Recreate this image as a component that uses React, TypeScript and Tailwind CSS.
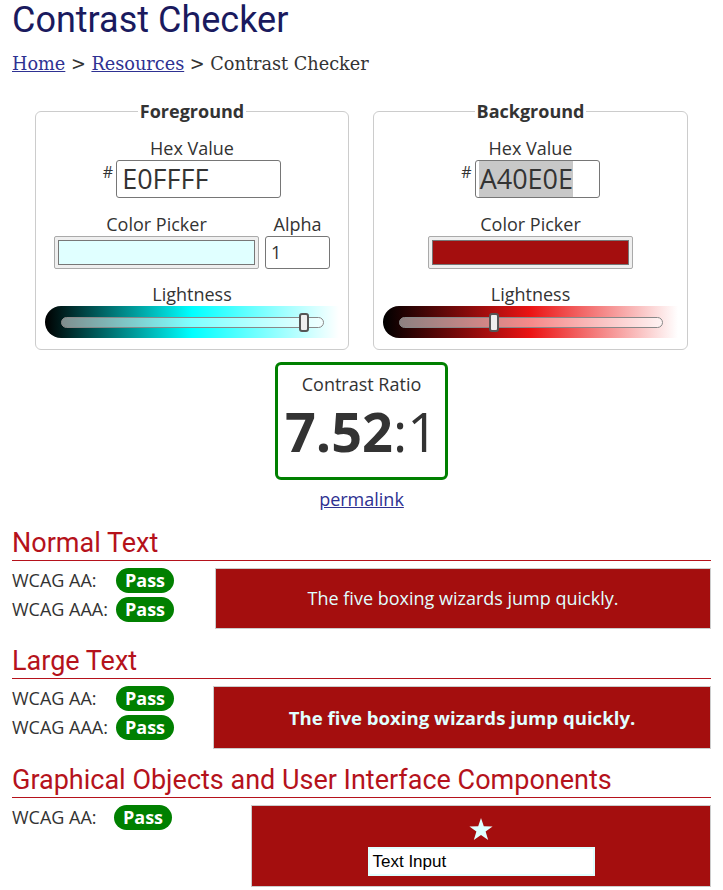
import React from 'react';

const sans = "font-['Open_Sans',sans-serif]";

const Slider = ({ gradient, thumb }: { gradient: string; thumb: number }) => (
  <div className={`flex h-[32px] items-center rounded-l-full pl-[16px] pr-[15px] ${gradient}`}>
    <div className="relative h-[11px] flex-1 rounded-full border border-[#888] bg-white/50">
      <div
        className="absolute top-[-5px] h-[19px] w-[10px] rounded-[3px] border-2 border-[#555] bg-[#eee]"
        style={{ left: thumb }}
      />
    </div>
  </div>
);

const Swatch = ({ color }: { color: string }) => (
  <div className="h-[33px] w-[205px] rounded-[2px] border border-[#aaa] bg-[#efefef] p-[3px]">
    <div className={`h-full w-full border border-[#777] ${color}`} />
  </div>
);

const Badge = () => (
  <span className="inline-flex h-[25px] items-center rounded-full bg-[#008000] px-[9px] text-[18px] font-bold text-white">
    Pass
  </span>
);

const Row = ({ label, w }: { label: string; w: string }) => (
  <div className="flex h-[25px] items-center">
    <span className={`${w} text-[18px] text-[#333]`}>{label}</span>
    <Badge />
  </div>
);

const Heading = ({ children }: { children: React.ReactNode }) => (
  <h2 className="border-b border-b-[#b5121b] pb-[1px] font-['Roboto',sans-serif] text-[27px] leading-[31px] text-[#b5121b]">
    {children}
  </h2>
);

export default function App() {
  return (
    <div className={`w-[723px] bg-white px-3 ${sans} text-[#333]`}>
      <h1 className="font-['Roboto',sans-serif] text-[36px] leading-[40px] text-[#1a1a5e]">
        Contrast Checker
      </h1>
      <nav className="mt-[13px] font-['DejaVu_Serif',serif] text-[17.7px] leading-[22px] text-[#333]">
        <a className="text-[#2e3192] underline" href="#">Home</a> &gt;{' '}
        <a className="text-[#2e3192] underline" href="#">Resources</a> &gt; Contrast Checker
      </nav>

      <div className="mt-[24px] flex justify-center gap-[24px]">
        <fieldset className="w-[314px] rounded-md border border-[#ccc] px-[9px] pb-[11px]">
          <legend align="center" className="mx-auto px-[2px] text-[18px] font-bold leading-[24px]">
            Foreground
          </legend>
          <div className="mt-[13px] text-center text-[18px] leading-[24px]">Hex Value</div>
          <div className="flex justify-center">
            <span className="mt-[2px] mr-[3px] text-[16px] leading-[20px]">#</span>
            <div className="flex h-[38px] w-[165px] items-center rounded-[3px] border border-[#767676] pl-[5px] text-[27px]">
              E0FFFF
            </div>
          </div>
          <div className="mt-[14px] flex justify-center gap-[6px]">
            <div className="flex flex-col items-center">
              <div className="text-[18px] leading-[24px]">Color Picker</div>
              <Swatch color="bg-[#e0ffff]" />
            </div>
            <div className="flex flex-col items-center">
              <div className="text-[18px] leading-[24px]">Alpha</div>
              <div className="flex h-[33px] w-[65px] items-center rounded-[3px] border border-[#767676] pl-[5px] text-[18px]">
                1
              </div>
            </div>
          </div>
          <div className="mt-[13px] text-center text-[18px] leading-[24px]">Lightness</div>
          <Slider gradient="bg-[linear-gradient(to_right,#000,#00ffff_50%,#fff)]" thumb={237} />
        </fieldset>

        <fieldset className="w-[315px] rounded-md border border-[#ccc] px-[9px] pb-[11px]">
          <legend align="center" className="mx-auto px-[2px] text-[18px] font-bold leading-[24px]">
            Background
          </legend>
          <div className="mt-[13px] text-center text-[18px] leading-[24px]">Hex Value</div>
          <div className="flex justify-center">
            <span className="mt-[2px] mr-[3px] text-[16px] leading-[20px]">#</span>
            <div className="flex h-[38px] w-[125px] items-stretch rounded-[3px] border border-[#767676] pl-[3px] text-[27px]">
              <span className="flex items-center bg-[#c8c8c8] pl-[1px]">A40E0E</span>
            </div>
          </div>
          <div className="mt-[14px] flex flex-col items-center">
            <div className="text-[18px] leading-[24px]">Color Picker</div>
            <Swatch color="bg-[#a40e0e]" />
          </div>
          <div className="mt-[13px] text-center text-[18px] leading-[24px]">Lightness</div>
          <Slider gradient="bg-[linear-gradient(to_right,#000,#eb1414_50%,#fff)]" thumb={89} />
        </fieldset>
      </div>

      <div className="mt-[12px] flex flex-col items-center">
        <div className="flex h-[118px] w-[173px] flex-col items-center rounded-md border-[3px] border-[#008000]">
          <div className="mt-[7px] text-[18px] leading-[24px]">Contrast Ratio</div>
          <div className="mt-[4px] text-[54px] leading-[62px]">
            <b>7.52</b>:1
          </div>
        </div>
        <a href="#" className="mt-[7px] text-[18px] leading-[24px] text-[#2e3192] underline">
          permalink
        </a>
      </div>

      <div className="mt-[17px]">
        <Heading>Normal Text</Heading>
        <div className="mt-[7px] flex">
          <div className="flex w-[203px] flex-col gap-[4px]">
            <Row label="WCAG AA:" w="w-[104px]" />
            <Row label="WCAG AAA:" w="w-[104px]" />
          </div>
          <div className="flex h-[61px] flex-1 items-center justify-center border border-[#ccc] bg-[#a40e0e] text-[18px] text-[#e0ffff]">
            The five boxing wizards jump quickly.
          </div>
        </div>
      </div>

      <div className="mt-[17px]">
        <Heading>Large Text</Heading>
        <div className="mt-[7px] flex">
          <div className="flex w-[201px] flex-col gap-[4px]">
            <Row label="WCAG AA:" w="w-[104px]" />
            <Row label="WCAG AAA:" w="w-[104px]" />
          </div>
          <div className="flex h-[63px] flex-1 items-center justify-center border border-[#ccc] bg-[#a40e0e] text-[18.6px] font-bold text-[#e0ffff]">
            The five boxing wizards jump quickly.
          </div>
        </div>
      </div>

      <div className="mt-[16px]">
        <Heading>Graphical Objects and User Interface Components</Heading>
        <div className="mt-[7px] flex">
          <div className="flex w-[239px] flex-col">
            <Row label="WCAG AA:" w="w-[102px]" />
          </div>
          <div className="flex h-[82px] flex-1 flex-col items-center border border-[#ccc] bg-[#a40e0e]">
            <svg width="24" height="23" viewBox="0 0 24 23" className="mt-[12px]">
              <polygon
                points="12,0 14.8,8.3 23.6,8.4 16.6,13.6 19.2,22 12,17 4.8,22 7.4,13.6 0.4,8.4 9.2,8.3"
                fill="#e0ffff"
              />
            </svg>
            <div className="mt-[6px] flex h-[29px] w-[227px] items-center border-2 border-[#e0ffff] bg-white pl-[3px] font-['Liberation_Sans',sans-serif] text-[17px] text-black">
              Text Input
            </div>
          </div>
        </div>
      </div>
    </div>
  );
}
